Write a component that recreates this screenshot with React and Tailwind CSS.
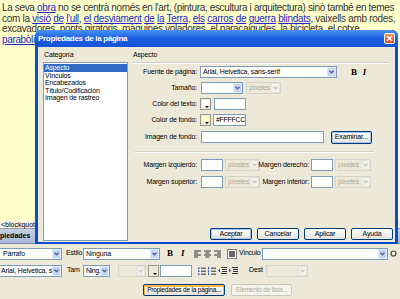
import React from "react";

function Arrow({ disabled }) {
  return (
    <div
      className={`w-[9px] h-full flex items-center justify-center border ${
        disabled ? "bg-[#F2F1EC] border-[#E4E2DA]" : "bg-[#C4D6FC] border-[#E2EAFE]"
      }`}
    >
      <svg width="5" height="4" viewBox="0 0 5 4">
        <path
          d="M0.5 0.8 L2.5 2.8 L4.5 0.8"
          fill="none"
          stroke={disabled ? "#C9C7BA" : "#4D6185"}
          strokeWidth="1.3"
        />
      </svg>
    </div>
  );
}

function Combo({ className = "", text, disabled }) {
  return (
    <div
      className={`flex h-[12px] border ${
        disabled ? "border-[#D5D3C8] bg-[#ECE9D8] text-[#ACA899]" : "border-[#7F9DB9] bg-white text-black"
      } ${className}`}
    >
      <div className="flex-1 min-w-0 overflow-hidden whitespace-nowrap pl-[2px] leading-[10px]">{text}</div>
      <Arrow disabled={disabled} />
    </div>
  );
}

function Input({ className = "", text }) {
  return (
    <div className={`h-[12px] border border-[#7F9DB9] bg-white pl-[2px] leading-[10px] whitespace-nowrap overflow-hidden ${className}`}>
      {text}
    </div>
  );
}

function Btn({ className = "", children, def, disabled, focus }) {
  let cls = "border-[#003C74] bg-gradient-to-b from-white to-[#E4E3DB] text-black";
  if (disabled) cls = "border-[#C9C7BA] bg-[#F5F4EA] text-[#ACA899]";
  return (
    <div
      className={`flex items-center justify-center rounded-[2px] border whitespace-nowrap ${cls} ${
        def ? "shadow-[inset_0_0_0_1px_#A6C2F3]" : ""
      } ${focus ? "shadow-[inset_0_1px_0_1px_#F9B94B]" : ""} ${className}`}
    >
      {children}
    </div>
  );
}

function Swatch({ color }) {
  return (
    <div className="relative w-[11px] h-[12px] border border-[#9A998F] bg-[#ECE9D8] p-[1px]">
      <div className={`w-[7px] h-[7px] ${color}`} />
      <div className="absolute right-[1px] bottom-[1px] w-0 h-0 border-l-[2px] border-r-[2px] border-t-[2px] border-l-transparent border-r-transparent border-t-black" />
    </div>
  );
}

function Lines({ type }) {
  const c = "#333";
  const paths = {
    left: ["M0 1h7", "M0 3h4", "M0 5h7", "M0 7h4"],
    center: ["M0 1h7", "M1.5 3h4", "M0 5h7", "M1.5 7h4"],
    right: ["M0 1h7", "M3 3h4", "M0 5h7", "M3 7h4"],
  };
  if (type === "ul") {
    return (
      <svg width="8" height="8" viewBox="0 0 8 8">
        <rect x="0" y="0.5" width="1.5" height="1.5" fill="#2A4BD0" />
        <rect x="0" y="3.5" width="1.5" height="1.5" fill="#2A4BD0" />
        <rect x="0" y="6.5" width="1.5" height="1.5" fill="#2A4BD0" />
        <path d="M3 1.2h5M3 4.2h5M3 7.2h5" stroke={c} strokeWidth="1" />
      </svg>
    );
  }
  if (type === "ol") {
    return (
      <svg width="8" height="8" viewBox="0 0 8 8">
        <path d="M0.5 0v2.2M0.5 3.3v2.2M0.5 6v2" stroke="#2A4BD0" strokeWidth="1" />
        <path d="M3 1.2h5M3 4.2h5M3 7.2h5" stroke={c} strokeWidth="1" />
      </svg>
    );
  }
  if (type === "out" || type === "in") {
    return (
      <svg width="9" height="8" viewBox="0 0 9 8">
        <path d="M3 0.5h6M4 2.5h5M4 4.5h5M3 6.5h6" stroke={c} strokeWidth="1" />
        <path d={type === "in" ? "M0 1.5l2 2l-2 2z" : "M2 1.5l-2 2l2 2z"} fill="#2A4BD0" />
      </svg>
    );
  }
  return (
    <svg width="8" height="8" viewBox="0 0 8 8">
      {paths[type].map((d, i) => (
        <path key={i} d={d} stroke={c} strokeWidth="1" />
      ))}
    </svg>
  );
}

function L({ children }) {
  return <span className="text-[#2828C8] underline">{children}</span>;
}

function PageText() {
  return (
    <div className="h-[221px] bg-[#FFFFCC] text-[#333] text-[10px] leading-[10.5px] tracking-[-0.35px] pt-[3px] pl-[2px] font-['Liberation_Sans',Arial,sans-serif] overflow-hidden">
      <div className="whitespace-nowrap">
        La seva <L>obra</L> no se centrà només en l'art, (pintura, escultura i arquitectura) sinò també en temes
      </div>
      <div className="whitespace-nowrap tracking-[-0.3px]">
        com la <L>visió</L> <L>de</L> <L>l'ull</L>, <L>el</L> <L>desviament</L> <L>de</L> <L>la</L> <L>Terra</L>,{" "}
        <L>els</L> <L>carros</L> <L>de</L> <L>guerra</L> <L>blindats</L>, vaixells amb rodes,
      </div>
      <div className="whitespace-nowrap">
        excavadores, ponts giratoris, màquines voladores, el paracaigudes, la bicicleta, el cotxe,
      </div>
      <div className="whitespace-nowrap">
        <L>parabòliques</L> i molts altres invents
      </div>
    </div>
  );
}

function Inspector() {
  return (
    <div className="flex-1 bg-[#ECE9D8] text-[7px] tracking-[-0.15px] text-black pt-[3px] flex flex-col gap-[4px]">
      <div className="flex items-center h-[13px]">
        <Combo className="w-[67px] ml-[-5px] pl-[5px]" text="Párrafo" />
        <span className="ml-[4px] w-[17px] whitespace-nowrap">Estilo</span>
        <Combo className="w-[77px]" text="Ninguna" />
        <span className="ml-[7px] w-[8px] font-['Liberation_Serif',serif] font-bold text-[9px] leading-[9px]">B</span>
        <span className="ml-[6px] w-[8px] font-['Liberation_Serif',serif] italic font-bold text-[9px] leading-[9px]">I</span>
        <div className="ml-[5px] flex items-center gap-[2px]">
          <Lines type="left" />
          <Lines type="center" />
          <Lines type="right" />
        </div>
        <div className="ml-[5px] w-[10px] h-[10px] border border-[#7A7A7A] bg-white p-[1px]">
          <div className="w-full h-full bg-[#6A6A6A]" />
        </div>
        <span className="ml-[2px] w-[23px] whitespace-nowrap tracking-[-0.3px]">Vínculo</span>
        <Combo className="w-[126px]" text="" />
        <svg className="ml-[2px]" width="7" height="7" viewBox="0 0 7 7">
          <circle cx="3.5" cy="3.5" r="2.5" fill="none" stroke="#444" strokeWidth="1.2" />
        </svg>
      </div>
      <div className="flex items-center h-[13px]">
        <Combo className="w-[67px] ml-[-5px] pl-[3px]" text="Arial, Helvetica, s" />
        <span className="ml-[5px] w-[15px] whitespace-nowrap">Tam</span>
        <Combo className="w-[27px] ml-[1px] tracking-[-0.4px]" text="Ning." />
        <Combo className="w-[28px] ml-[8px]" text="" disabled />
        <div className="ml-[2px]">
          <Swatch color="bg-[#ECE9D8]" />
        </div>
        <Input className="w-[32px] ml-[1px]" text="" />
        <div className="ml-[6px] flex items-center gap-[2px]">
          <Lines type="ul" />
          <Lines type="ol" />
          <Lines type="out" />
          <Lines type="in" />
        </div>
        <span className="ml-[11px] w-[17px] whitespace-nowrap">Dest</span>
        <Combo className="w-[42px]" text="" disabled />
      </div>
      <div className="flex items-center h-[13px] mt-[2px] text-[6.5px] tracking-[-0.2px]">
        <Btn className="ml-[143px] w-[82px] h-[12px]" focus>
          Propiedades de la página...
        </Btn>
        <Btn className="ml-[6px] w-[61px] h-[12px]" disabled>
          Elemento de lista...
        </Btn>
      </div>
    </div>
  );
}

function Dialog() {
  const lab = "w-[67px] flex justify-end pr-[3px] shrink-0 whitespace-nowrap";
  const lab2 = "w-[51px] flex justify-end pr-[2px] shrink-0 whitespace-nowrap";
  return (
    <div className="absolute left-[35px] top-[30px] w-[363px] h-[214px] bg-[#0A4CD6] rounded-t-[6px] flex flex-col text-[7px] tracking-[-0.15px] text-black">
      <div className="h-[17px] rounded-t-[6px] bg-gradient-to-b from-[#4A91F5] via-[#1C5EE0] to-[#1553D8] flex items-center pl-[3px] pr-[3px]">
        <span className="text-white font-bold text-[8px] tracking-[-0.3px] font-['Liberation_Sans',Arial,sans-serif] flex-1">
          Propiedades de la página
        </span>
        <div className="w-[11px] h-[11px] rounded-[2px] border border-white bg-gradient-to-b from-[#F08A60] to-[#D9441C] flex items-center justify-center">
          <svg width="7" height="7" viewBox="0 0 7 7">
            <path d="M1 1L6 6M6 1L1 6" stroke="white" strokeWidth="1.4" />
          </svg>
        </div>
      </div>
      <div className="flex-1 mx-[3px] mb-[2px] bg-[#ECE9D8] flex pl-[5px] pr-[1px]">
        <div className="w-[85px] flex flex-col">
          <div className="h-[8px] leading-[8px] mt-[4px] ml-[1px]">Categoría</div>
          <div className="flex-1 mt-[3px] mb-[1px] border border-[#7F9DB9] bg-white leading-[7.5px] pt-[1px]">
            <div className="bg-[#316AC5] text-white pl-[1px]">Aspecto</div>
            <div className="pl-[1px]">Vínculos</div>
            <div className="pl-[1px]">Encabezados</div>
            <div className="pl-[1px]">Título/Codificación</div>
            <div className="pl-[1px]">Imagen de rastreo</div>
          </div>
        </div>
        <div className="flex-1 ml-[5px] flex flex-col">
          <div className="h-[8px] leading-[8px] mt-[4px]">Aspecto</div>
          <div className="mt-[3px] mr-[4px] h-[2px] border-t border-[#D0CEC2] border-b border-b-white" />
          <div className="mt-[2px] flex items-center h-[12px]">
            <span className={lab}>Fuente de página:</span>
            <Combo className="w-[137px]" text="Arial, Helvetica, sans-serif" />
            <span className="ml-[14px] font-['Liberation_Serif',serif] font-bold text-[9px] leading-[9px]">B</span>
            <span className="ml-[6px] font-['Liberation_Serif',serif] font-bold italic text-[9px] leading-[9px]">I</span>
          </div>
          <div className="mt-[4px] flex items-center h-[12px]">
            <span className={lab}>Tamaño:</span>
            <Combo className="w-[42px] ml-[1px]" text="" />
            <Combo className="w-[35px] ml-[3px]" text="píxeles" disabled />
          </div>
          <div className="mt-[4px] flex items-center h-[12px]">
            <span className={lab}>Color del texto:</span>
            <Swatch color="bg-white" />
            <Input className="w-[32px] ml-[3px]" text="" />
          </div>
          <div className="mt-[4px] flex items-center h-[12px]">
            <span className={lab}>Color de fondo:</span>
            <Swatch color="bg-[#FFFFCC]" />
            <Input className="w-[33px] ml-[2px] pl-[1px] tracking-[-0.3px]" text="#FFFFCC" />
          </div>
          <div className="mt-[5px] flex items-center h-[12px]">
            <span className={lab}>Imagen de fondo:</span>
            <Input className="w-[123px] ml-[1px]" text="" />
            <Btn className="w-[41px] h-[13px] ml-[7px]" def>
              Examinar...
            </Btn>
          </div>
          <div className="mt-[8px] ml-[2px] w-[239px] h-[2px] border-t border-[#D0CEC2] border-b border-b-white" />
          <div className="mt-[6px] flex items-center h-[12px]">
            <span className={lab}>Margen izquierdo:</span>
            <Input className="w-[22px] ml-[1px]" text="" />
            <Combo className="w-[35px] ml-[2px]" text="píxeles" disabled />
            <span className={lab2}>Margen derecho:</span>
            <Input className="w-[22px]" text="" />
            <Combo className="w-[36px] ml-[2px]" text="píxeles" disabled />
          </div>
          <div className="mt-[5px] flex items-center h-[12px]">
            <span className={lab}>Margen superior:</span>
            <Input className="w-[22px] ml-[1px]" text="" />
            <Combo className="w-[35px] ml-[2px]" text="píxeles" disabled />
            <span className={lab2}>Margen inferior:</span>
            <Input className="w-[22px]" text="" />
            <Combo className="w-[36px] ml-[2px]" text="píxeles" disabled />
          </div>
          <div className="flex-1" />
          <div className="flex items-center gap-[5px] ml-[77px] mb-[2px] h-[12px]">
            <Btn className="w-[42px] h-[12px]" def>
              Aceptar
            </Btn>
            <Btn className="w-[42px] h-[12px]">Cancelar</Btn>
            <Btn className="w-[42px] h-[12px]">Aplicar</Btn>
            <Btn className="w-[42px] h-[12px]">Ayuda</Btn>
          </div>
        </div>
      </div>
    </div>
  );
}

export default function App() {
  return (
    <div className="relative w-[400px] h-[299px] overflow-hidden bg-[#ECE9D8] font-['Liberation_Sans',Arial,sans-serif]">
      <div className="flex flex-col h-full">
        <PageText />
        <div className="h-[8px] bg-[#F4F2E8] border-b border-[#A0A0A0] text-[7px] leading-[7px] text-black pl-[1px] whitespace-nowrap">
          &lt;blockquote&gt;
        </div>
        <div className="h-[15px] bg-gradient-to-b from-[#C6D1E6] to-[#A9B8D6] border-b border-[#7F8BA8] text-[7px] font-bold leading-[14px] text-black whitespace-nowrap">
          piedades
        </div>
        <Inspector />
      </div>
      <Dialog />
    </div>
  );
}
